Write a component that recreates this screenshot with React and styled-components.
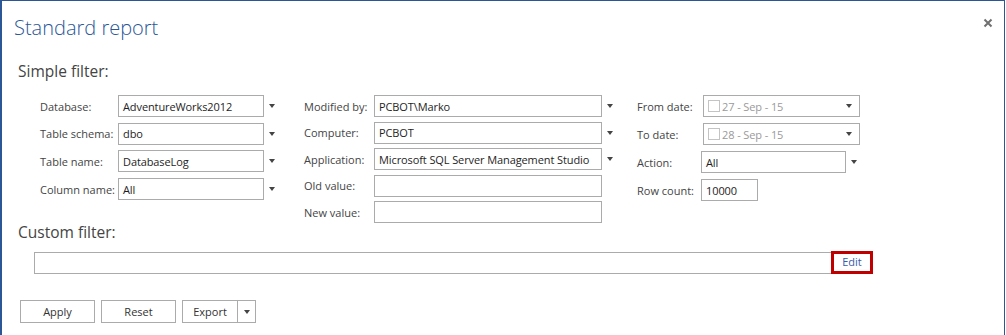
import React from 'react';
import styled, { createGlobalStyle } from 'styled-components';

const GlobalStyle = createGlobalStyle`
  html, body {
    margin: 0;
    padding: 0;
    background: #fff;
  }
  body {
    font-family: "Open Sans", "Noto Sans", sans-serif;
    font-size: 11px;
    color: #444;
  }
`;

const Frame = styled.div`
  box-sizing: border-box;
  width: 1005px;
  height: 335px;
  border: 1px solid #2b5797;
  border-left-width: 2px;
  border-bottom: none;
  background: #fff;
`;

const Header = styled.div`
  display: flex;
  justify-content: space-between;
  align-items: flex-start;
  padding: 11px 11px 0 12px;
  height: 33px;
`;

const Title = styled.h1`
  margin: 0;
  font-size: 20px;
  font-weight: 300;
  line-height: 32px;
  color: #2b5797;
`;

const Close = styled.button`
  border: none;
  background: none;
  padding: 0;
  margin-top: 6px;
  width: 10px;
  height: 10px;
  display: flex;
  cursor: pointer;
`;

const SectionTitle = styled.div`
  margin: ${p => p.$top}px 0 0 16px;
  font-size: 15.5px;
  line-height: 18px;
  color: #444;
`;

const Filters = styled.div`
  display: flex;
  margin-top: 15px;
  padding-left: 38px;
`;

const Column = styled.div`
  display: flex;
  flex-direction: column;
  gap: ${p => p.$gap}px;
  width: ${p => p.$width}px;
`;

const Field = styled.div`
  display: flex;
  align-items: center;
  height: 22px;
`;

const Label = styled.span`
  width: ${p => p.$width}px;
  flex: none;
  font-size: 11px;
  color: #444;
  white-space: nowrap;
`;

const Box = styled.div`
  box-sizing: border-box;
  display: flex;
  align-items: center;
  width: ${p => p.$width}px;
  height: 22px;
  padding: 0 4px;
  border: 1px solid #ababab;
  background: #fff;
  font-size: 11px;
  letter-spacing: -0.1px;
  color: ${p => (p.$muted ? '#9a9a9a' : '#1e1e1e')};
  white-space: nowrap;
`;

const Arrow = styled.span`
  width: 0;
  height: 0;
  margin-left: ${p => p.$gap}px;
  border-left: 3.5px solid transparent;
  border-right: 3.5px solid transparent;
  border-top: 4px solid #444;
`;

const Check = styled.span`
  box-sizing: border-box;
  width: 12px;
  height: 12px;
  margin-right: 2px;
  border: 1px solid #c4c4c4;
  flex: none;
`;

const DateText = styled.span`
  flex: 1;
`;

const CustomRow = styled.div`
  display: flex;
  align-items: center;
  margin: 11px 0 0 32px;
`;

const EditBox = styled.a`
  box-sizing: border-box;
  display: flex;
  justify-content: center;
  align-items: flex-start;
  width: 42px;
  height: 23px;
  margin: -2px 0 0 -1px;
  border: 3px solid #c00000;
  font-size: 11px;
  color: #3b5aad;
  text-decoration: none;
  line-height: 15px;
  cursor: pointer;
`;

const Buttons = styled.div`
  display: flex;
  gap: 6px;
  margin: 26px 0 0 18px;
`;

const Button = styled.button`
  box-sizing: border-box;
  width: ${p => p.$width}px;
  height: 23px;
  padding: 0;
  border: 1px solid #ababab;
  background: #fff;
  font-family: inherit;
  font-size: 11px;
  color: #333;
  cursor: pointer;
`;

const Split = styled.div`
  display: flex;
`;

const SplitArrow = styled.button`
  box-sizing: border-box;
  width: 18px;
  height: 23px;
  display: flex;
  align-items: center;
  justify-content: center;
  padding: 0;
  border: 1px solid #ababab;
  border-left: none;
  background: #fff;
`;

const Combo = ({ label, labelWidth, width, value, arrowGap = 5, arrow = true }) => (
  <Field>
    <Label $width={labelWidth}>{label}</Label>
    <Box $width={width}>{value}</Box>
    {arrow && <Arrow $gap={arrowGap} />}
  </Field>
);

const DateField = ({ label, value }) => (
  <Field>
    <Label $width={66}>{label}</Label>
    <Box $width={157} $muted>
      <Check />
      <DateText>{value}</DateText>
      <Arrow $gap={0} style={{ marginRight: 3 }} />
    </Box>
  </Field>
);

export default function App() {
  return (
    <>
      <GlobalStyle />
      <Frame>
        <Header>
          <Title>Standard report</Title>
          <Close aria-label="Close">
            <svg width="10" height="10" viewBox="0 0 10 10">
              <path d="M1.5 1.5 L8.5 8.5 M8.5 1.5 L1.5 8.5" stroke="#707070" strokeWidth="2" />
            </svg>
          </Close>
        </Header>

        <SectionTitle $top={17}>Simple filter:</SectionTitle>

        <Filters>
          <Column $width={264} $gap={5.7}>
            <Combo label="Database:" labelWidth={78} width={146} value="AdventureWorks2012" />
            <Combo label="Table schema:" labelWidth={78} width={146} value="dbo" />
            <Combo label="Table name:" labelWidth={78} width={146} value="DatabaseLog" />
            <Combo label="Column name:" labelWidth={78} width={146} value="All" />
          </Column>
          <Column $width={333} $gap={4.5}>
            <Combo label="Modified by:" labelWidth={70} width={228} value="PCBOT\Marko" />
            <Combo label="Computer:" labelWidth={70} width={228} value="PCBOT" />
            <Combo label="Application:" labelWidth={70} width={228} value="Microsoft SQL Server Management Studio" />
            <Combo label="Old value:" labelWidth={70} width={228} value="" arrow={false} />
            <Combo label="New value:" labelWidth={70} width={228} value="" arrow={false} />
          </Column>
          <Column $width={260} $gap={6}>
            <DateField label="From date:" value="27 - Sep - 15" />
            <DateField label="To date:" value="28 - Sep - 15" />
            <Combo label="Action:" labelWidth={64} width={145} value="All" arrowGap={5} />
            <Combo label="Row count:" labelWidth={64} width={57} value="10000" arrow={false} />
          </Column>
        </Filters>

        <SectionTitle $top={0}>Custom filter:</SectionTitle>

        <CustomRow>
          <Box $width={798} />
          <EditBox>Edit</EditBox>
        </CustomRow>

        <Buttons>
          <Button $width={75}>Apply</Button>
          <Button $width={75}>Reset</Button>
          <Split>
            <Button $width={56}>Export</Button>
            <SplitArrow aria-label="More">
              <Arrow $gap={0} />
            </SplitArrow>
          </Split>
        </Buttons>
      </Frame>
    </>
  );
}
